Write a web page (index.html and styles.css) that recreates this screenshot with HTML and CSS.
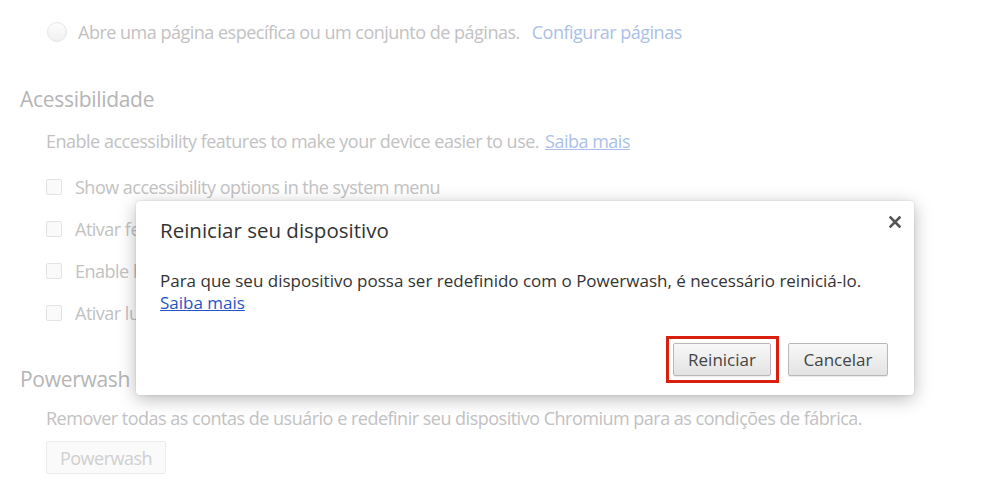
FILE: index.html
```html
<!DOCTYPE html>
<html lang="pt">
<head>
<meta charset="utf-8">
<link rel="stylesheet" href="styles.css">
</head>
<body>
<div class="page">
  <div class="row radio-row">
    <span class="radio"></span>
    <span class="txt">Abre uma página específica ou um conjunto de páginas.</span>
    <span class="link-faded">Configurar páginas</span>
  </div>
  <div class="heading h-acc">Acessibilidade</div>
  <div class="row desc">
    <span class="txt">Enable accessibility features to make your device easier to use.</span>
    <span class="link-faded under">Saiba mais</span>
  </div>
  <div class="checks">
    <div class="row check-row"><span class="check"></span><span class="txt">Show accessibility options in the system menu</span></div>
    <div class="row check-row"><span class="check"></span><span class="txt">Ativar feedback falado</span></div>
    <div class="row check-row"><span class="check"></span><span class="txt">Enable high contrast mode</span></div>
    <div class="row check-row"><span class="check"></span><span class="txt">Ativar lupa de tela</span></div>
  </div>
  <div class="heading h-pw">Powerwash</div>
  <div class="row desc2">
    <span class="txt">Remover todas as contas de usuário e redefinir seu dispositivo Chromium para as condições de fábrica.</span>
  </div>
  <div class="pw-btn">Powerwash</div>
</div>

<div class="dialog">
  <div class="dlg-head">
    <span class="dlg-title">Reiniciar seu dispositivo</span>
    <svg class="close" width="12" height="12" viewBox="0 0 12 12"><path d="M1.5 1.5 L10.5 10.5 M10.5 1.5 L1.5 10.5" stroke="#555" stroke-width="2.6" stroke-linecap="square"/></svg>
  </div>
  <div class="dlg-body">
    <div>Para que seu dispositivo possa ser redefinido com o Powerwash, é necessário reiniciá-lo.</div>
    <a class="dlg-link">Saiba mais</a>
  </div>
  <div class="dlg-actions">
    <span class="btn btn-restart">Reiniciar</span>
    <span class="btn btn-cancel">Cancelar</span>
  </div>
</div>
<div class="highlight"></div>
</body>
</html>
```

FILE: styles.css
```css
html, body {
  margin: 0;
  padding: 0;
  background: #fff;
  width: 984px;
  height: 480px;
  overflow: hidden;
}
body {
  font-family: "Open Sans", "Noto Sans", sans-serif;
  position: relative;
}
.page {
  display: flex;
  flex-direction: column;
  padding-left: 20px;
  color: #c2c2c2;
  font-size: 18px;
  letter-spacing: -0.5px;
}
.row {
  display: flex;
  align-items: center;
  padding-left: 26px;
}
.radio-row {
  margin-top: 12px;
  height: 40px;
  gap: 10px;
}
.radio {
  width: 20px;
  height: 20px;
  border-radius: 50%;
  border: 1px solid #e6e6e6;
  background: linear-gradient(#fdfdfd, #f0f0f0);
  box-sizing: border-box;
  margin-left: 1px;
  margin-right: 1px;
}
.link-faded {
  color: #abc1e8;
  margin-left: 2px;
}
.under {
  text-decoration: underline;
  margin-left: 6px;
}
.heading {
  font-size: 21px;
  letter-spacing: -0.3px;
  color: #b5b5b5;
  height: 30px;
  line-height: 30px;
}
.h-acc { margin-top: 32px; }
.desc { margin-top: 12px; height: 30px; }
.checks {
  margin-top: 10px;
  display: flex;
  flex-direction: column;
}
.check-row {
  height: 42px;
  gap: 13px;
}
.check {
  width: 16px;
  height: 16px;
  border: 1px solid #e3e3e3;
  border-radius: 2px;
  box-sizing: border-box;
  background: #fafafa;
}
.h-pw { margin-top: 30px; }
.desc2 { margin-top: 9px; height: 30px; }
.pw-btn {
  margin-left: 26px;
  margin-top: 8px;
  width: 120px;
  height: 33px;
  box-sizing: border-box;
  border: 1px solid #ececec;
  border-radius: 2px;
  background: #fafafa;
  color: #cfcfcf;
  display: flex;
  align-items: center;
  justify-content: center;
}

.dialog {
  position: absolute;
  left: 136px;
  top: 201px;
  width: 778px;
  height: 194px;
  box-sizing: border-box;
  background: #fff;
  border-radius: 4px;
  box-shadow: 0 4px 18px rgba(0,0,0,0.28), 0 0 2px rgba(0,0,0,0.15);
  padding: 0 26px 0 24px;
  display: flex;
  flex-direction: column;
  color: #333;
}
.dlg-head {
  height: 58px;
  display: flex;
  align-items: center;
  justify-content: space-between;
}
.dlg-title {
  font-size: 20.5px;
  color: #333;
}
.close {
  margin-top: -17px;
  margin-right: -13px;
}
.dlg-body {
  font-size: 17px;
  line-height: 22px;
  margin-top: 11px;
}
.dlg-link {
  color: #1f55c7;
  text-decoration: underline;
}
.dlg-actions {
  margin-top: 29px;
  display: flex;
  justify-content: flex-end;
  gap: 17px;
}
.btn {
  height: 33px;
  box-sizing: border-box;
  border: 1px solid #b8b8b8;
  border-radius: 2px;
  background: linear-gradient(#f8f8f8, #e3e3e3);
  box-shadow: 0 1px 0 rgba(0,0,0,0.08);
  color: #444;
  font-size: 17px;
  display: flex;
  align-items: center;
  justify-content: center;
}
.btn-restart { width: 98px; }
.btn-cancel { width: 100px; }
.highlight {
  position: absolute;
  left: 666px;
  top: 336px;
  width: 113px;
  height: 47px;
  box-sizing: border-box;
  border: 3px solid #d9200e;
}
```
